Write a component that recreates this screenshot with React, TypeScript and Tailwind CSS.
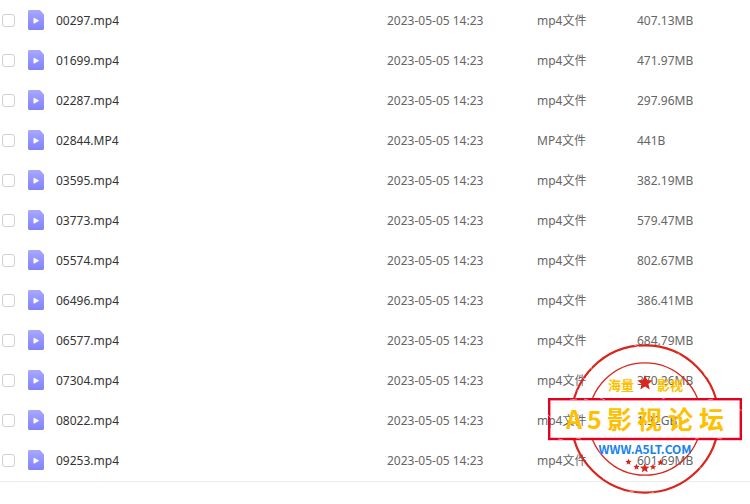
interface IFileProps {
    name: string
    type: string
    size: string
}

const modified = '2023-05-05 14:23'

const files: IFileProps[] = [
    { name: '00297.mp4', type: 'mp4文件', size: '407.13MB' },
    { name: '01699.mp4', type: 'mp4文件', size: '471.97MB' },
    { name: '02287.mp4', type: 'mp4文件', size: '297.96MB' },
    { name: '02844.MP4', type: 'MP4文件', size: '441B' },
    { name: '03595.mp4', type: 'mp4文件', size: '382.19MB' },
    { name: '03773.mp4', type: 'mp4文件', size: '579.47MB' },
    { name: '05574.mp4', type: 'mp4文件', size: '802.67MB' },
    { name: '06496.mp4', type: 'mp4文件', size: '386.41MB' },
    { name: '06577.mp4', type: 'mp4文件', size: '684.79MB' },
    { name: '07304.mp4', type: 'mp4文件', size: '370.26MB' },
    { name: '08022.mp4', type: 'mp4文件', size: '1.32GB' },
    { name: '09253.mp4', type: 'mp4文件', size: '601.69MB' },
]

const VideoIcon = () => (
    <svg className="h-5 w-4 shrink-0" viewBox="0 0 16 20" aria-hidden="true">
        <defs>
            <linearGradient id="video-fill" x1="0" y1="0" x2="0" y2="1">
                <stop offset="0" stopColor="#a6a8ff" />
                <stop offset="1" stopColor="#8182fb" />
            </linearGradient>
        </defs>
        <path
            fill="url(#video-fill)"
            d="M1.4 0H11.4C11.8 0 12.1 .2 12.4 .5L15.6 4C15.9 4.3 16 4.6 16 5V18.6A1.4 1.4 0 0 1 14.6 20H1.4A1.4 1.4 0 0 1 0 18.6V1.4A1.4 1.4 0 0 1 1.4 0Z"
        />
        <path
            fill="#fff"
            d="M5.5 8.4C5.5 7.9 6 7.7 6.4 7.9L10.6 10.2C11 10.4 11 10.9 10.6 11.1L6.4 13.4C6 13.6 5.5 13.4 5.5 12.9Z"
        />
    </svg>
)

interface StarProps {
    x: number
    y: number
    r: number
}

const Star: React.FC<StarProps> = ({ x, y, r }) => (
    <path
        fill="#d9251c"
        transform={`translate(${x} ${y}) scale(${r})`}
        d="M0 -1L.27 -.36L.95 -.31L.43 .14L.59 .81L0 .45L-.59 .81L-.43 .14L-.95 -.31L-.27 -.36Z"
    />
)

const Stamp = () => (
    <svg
        className="pointer-events-none absolute right-2 top-[343px] h-[152px] w-[196px]"
        viewBox="0 0 196 152"
        role="img"
        aria-label="A5影视论坛"
    >
        <defs>
            {/* the rings stop at the edges of the name plate */}
            <clipPath id="ring-clip">
                <path d="M0 0H196V55H0ZM0 97H196V152H0Z" />
            </clipPath>
        </defs>
        <g clipPath="url(#ring-clip)" fill="none" stroke="#d9251c">
            <circle cx="99" cy="76" r="73.6" strokeWidth="2.2" />
            <circle cx="99" cy="76" r="56.2" strokeWidth="1.3" />
        </g>
        <rect x="3.2" y="56.2" width="191.6" height="39.8" fill="none" stroke="#e60020" strokeWidth="2.4" />
        {/* worn spots in the ink */}
        <g stroke="#fff" strokeWidth="0.8" fill="none" opacity="0.6">
            <path d="M36 34l5 4M45 24l2 4M88 2l5 2M132 10l2 3M158 31l3 3M31 48l5-2M152 123l4 3M83 148l5 1M103 151l5-2M57 136l3-2" />
            <path d="M24 57l7-1M38 56l4 1M54 55l5 2M116 56l3-1M162 57l5-1M2 72l3 3M12 96l5 1M30 95l5 1M149 96l4-1M171 95l5 1M193 66l3 2" />
        </g>
        <Star x={99} y={40} r={8} />
        <Star x={82.5} y={119} r={3.3} />
        <Star x={90.5} y={124} r={3.3} />
        <Star x={98.7} y={125.3} r={5} />
        <Star x={107} y={124} r={3.3} />
        <Star x={114.5} y={119.5} r={3.3} />
        <g className="font-['Noto_Sans_CJK_SC',sans-serif] font-bold" fill="#ffc000">
            <text x="62" y="47" fontSize="13">
                海量
            </text>
            <text x="111" y="47" fontSize="13">
                影视
            </text>
            <text x="20 41 61 91 122 153" y="86" fontSize="25">
                A5影视论坛
            </text>
        </g>
        <text
            x="99"
            y="111"
            textAnchor="middle"
            fontSize="12"
            fill="#1683f0"
            className="font-['Noto_Sans_CJK_SC',sans-serif] font-bold"
        >
            WWW.A5LT.COM
        </text>
    </svg>
)

export default function App() {
    return (
        <main className="relative min-h-screen overflow-hidden bg-white font-['Noto_Sans','Noto_Sans_CJK_SC',sans-serif] text-xs text-[#666]">
            <table className="w-full table-fixed">
                <colgroup>
                    <col className="w-7" />
                    <col />
                    <col className="w-[150px]" />
                    <col className="w-[100px]" />
                    <col className="w-[113px]" />
                </colgroup>
                <tbody>
                    {files.map((file, index) => (
                        <tr key={file.name}>
                            <td className="h-10 p-0 pl-0.5 align-top">
                                <input
                                    id={`file-${index}`}
                                    type="checkbox"
                                    className="mt-3.5 block size-[13px] appearance-none rounded-[3px] border border-[#d0d0d0] bg-white checked:bg-[#8182fb]"
                                />
                            </td>
                            <td className="p-0 align-top">
                                <label htmlFor={`file-${index}`} className="flex h-10 items-center gap-3 text-[#333]">
                                    <VideoIcon />
                                    <span className="truncate pt-0.5">{file.name}</span>
                                </label>
                            </td>
                            <td className="p-0 pt-0.5 align-top leading-[38px]">{modified}</td>
                            <td className="p-0 pt-0.5 align-top leading-[38px]">{file.type}</td>
                            <td className="p-0 pt-0.5 align-top leading-[38px]">{file.size}</td>
                        </tr>
                    ))}
                </tbody>
            </table>
            <div className="mt-px border-t border-[#ededed]" />
            <Stamp />
        </main>
    )
}
